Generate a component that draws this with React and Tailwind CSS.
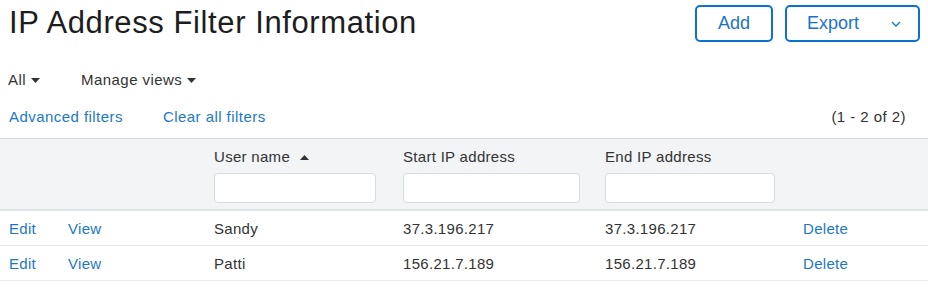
import React from 'react';

const rows = [
  { name: 'Sandy', start: '37.3.196.217', end: '37.3.196.217' },
  { name: 'Patti', start: '156.21.7.189', end: '156.21.7.189' },
];

function Caret({ up }) {
  return (
    <svg width="9" height="5" viewBox="0 0 9 5" className="inline-block">
      {up ? <path d="M0 5 L4.5 0 L9 5 Z" fill="#333" /> : <path d="M0 0 L9 0 L4.5 5 Z" fill="#333" />}
    </svg>
  );
}

function FilterInput() {
  return <div className="h-[30px] rounded-[4px] border border-[#d6dce0] bg-white" />;
}

export default function App() {
  return (
    <div
      className="w-[928px] h-[296px] bg-white text-[#333] overflow-hidden"
      style={{ fontFamily: '"Liberation Sans", Arial, sans-serif' }}
    >
      <div className="flex items-start justify-between pl-[9px] pr-[8px] pt-[5px] h-[43px]">
        <h1 className="text-[31px] leading-[36px] tracking-[0.6px] text-[#1d1d1f]">
          IP Address Filter Information
        </h1>
        <div className="flex gap-[12px]">
          <button className="h-[37px] w-[78px] rounded-[5px] border-2 border-[#0a73d0] text-[18px] text-[#1a73c8]">
            Add
          </button>
          <button className="h-[37px] w-[135px] rounded-[5px] border-2 border-[#0a73d0] text-[18px] text-[#1a73c8] flex items-center pl-[20px]">
            <span>Export</span>
            <svg width="10" height="6" viewBox="0 0 10 6" className="ml-[32px]">
              <path d="M1 1 L5 5 L9 1" fill="none" stroke="#1a73c8" strokeWidth="1.3" />
            </svg>
          </button>
        </div>
      </div>

      <div className="mt-[27px] h-[20px] flex items-center pl-[8px] text-[15px] tracking-[0.45px] text-[#333]">
        <span>All</span>
        <span className="ml-[5px] mt-[1px] flex"><Caret /></span>
        <span className="ml-[41px]">Manage views</span>
        <span className="ml-[5px] mt-[1px] flex"><Caret /></span>
      </div>

      <div className="mt-[17px] h-[20px] flex items-center pl-[9px] pr-[22px] text-[15px] tracking-[0.45px]">
        <span className="text-[#1b78c8]">Advanced filters</span>
        <span className="ml-[40px] text-[#1b78c8]">Clear all filters</span>
        <span className="ml-auto text-[#333]">(1 - 2 of 2)</span>
      </div>

      <div className="mt-[11px] border-t border-[#d3dadf]">
        <div className="grid grid-cols-[59px_146px_189px_202px_198px_1fr] pl-[9px] bg-[#f2f4f5] border-b-2 border-[#dde2e5] pt-[8px] pb-[6px] text-[15px] tracking-[0.3px] text-[#333]">
          <div />
          <div />
          <div className="pr-[27px]">
            <div className="h-[20px] flex items-center">
              User name
              <span className="ml-[10px] flex"><Caret up /></span>
            </div>
            <div className="mt-[6px]"><FilterInput /></div>
          </div>
          <div className="pr-[25px]">
            <div className="h-[20px] flex items-center">Start IP address</div>
            <div className="mt-[6px]"><FilterInput /></div>
          </div>
          <div className="pr-[28px]">
            <div className="h-[20px] flex items-center">End IP address</div>
            <div className="mt-[6px]"><FilterInput /></div>
          </div>
          <div />
        </div>

        {rows.map((r) => (
          <div
            key={r.name}
            className="grid grid-cols-[59px_146px_189px_202px_198px_1fr] pl-[9px] h-[35px] items-center border-b-[1.5px] border-[#e6eaec] pt-[2px] text-[15px] tracking-[0.3px] text-[#333]"
          >
            <span className="text-[#1b78c8]">Edit</span>
            <span className="text-[#1b78c8]">View</span>
            <span>{r.name}</span>
            <span>{r.start}</span>
            <span>{r.end}</span>
            <span className="text-[#1b78c8]">Delete</span>
          </div>
        ))}
      </div>
    </div>
  );
}
